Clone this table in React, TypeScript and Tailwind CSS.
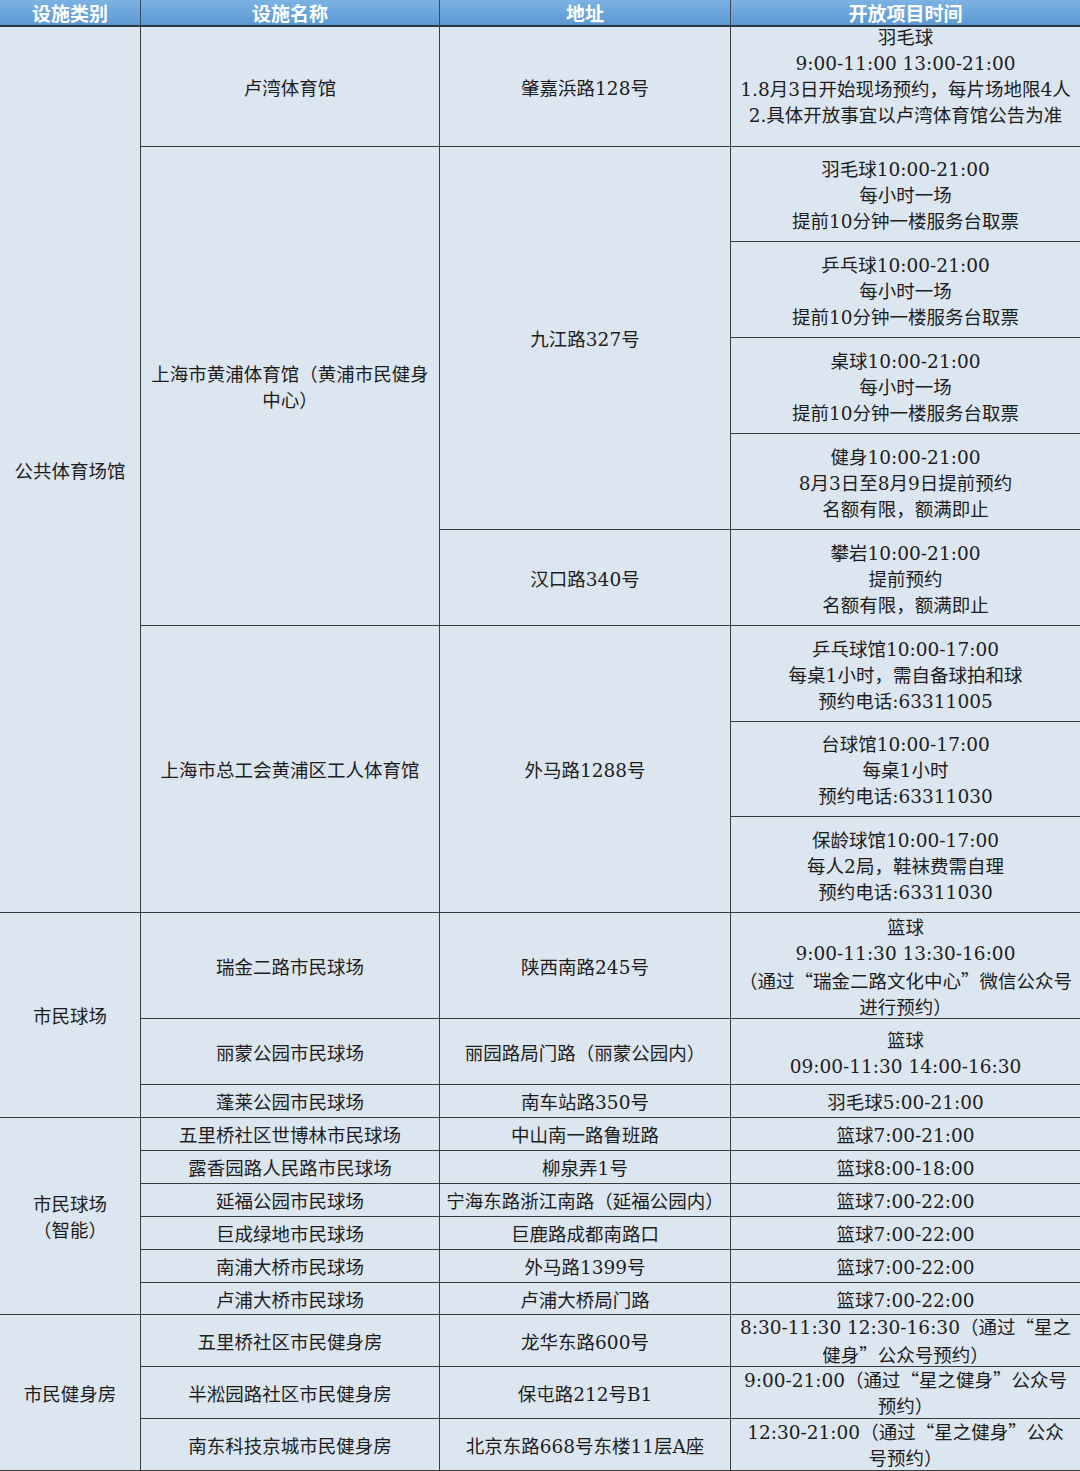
import React from 'react'

type CellProps = {
  children?: React.ReactNode
  className?: string
  last?: boolean
}

// one table cell, text centred both ways
function Cell({ children, className = '', last = false }: CellProps) {
  return (
    <div
      className={
        'flex items-center justify-center text-center whitespace-nowrap leading-[26px] pt-[4px] border-b border-[#3c3c3c] overflow-visible ' +
        (last ? '' : 'border-r ') +
        className
      }
    >
      <div>{children}</div>
    </div>
  )
}

// curly quotes go to the CJK font so they come out full width
function Txt({ s }: { s: string }) {
  const parts = s.split(/([“”])/)
  return (
    <>
      {parts.map((p, i) =>
        p === '“' || p === '”' ? (
          <span key={i} className="font-['Noto_Sans_CJK_SC',sans-serif]">
            {p}
          </span>
        ) : (
          <React.Fragment key={i}>{p}</React.Fragment>
        )
      )}
    </>
  )
}

function Lines({ rows }: { rows: string[] }) {
  return (
    <>
      {rows.map((r, i) => (
        <div key={i}>
          <Txt s={r} />
        </div>
      ))}
    </>
  )
}

const head = ['设施类别', '设施名称', '地址', '开放项目时间']

export default function App() {
  return (
    <div
      className="w-[1080px] h-[1471px] bg-[#dce6f0] text-[#1c1c1c] text-[18.5px] overflow-hidden"
      style={{ fontFamily: '"DejaVu Serif", "Noto Sans CJK SC", serif' }}
    >
      <div className="grid grid-cols-[141px_299px_291px_349px] grid-rows-[27px_120px_95px_96px_96px_96px_96px_96px_95px_96px_106px_66px_33px_33px_33px_33px_33px_33px_32px_52px_52px_52px]">
        {head.map((h, i) => (
          <div
            key={h}
            className={
              'flex items-center justify-center bg-gradient-to-b from-[#7db3e3] to-[#5b98d3] text-white text-[19px] leading-none font-bold border-b-2 border-[#2e3a48] ' +
              (i < 3 ? 'border-r border-r-[#3c4c5c]' : '')
            }
            style={{ fontFamily: '"Noto Sans CJK SC", serif' }}
          >
            {h}
          </div>
        ))}

        {/* 公共体育场馆 */}
        <Cell className="row-span-9">公共体育场馆</Cell>
        <Cell>卢湾体育馆</Cell>
        <Cell>肇嘉浜路128号</Cell>
        <Cell last className="!items-start !pt-0">
          <div className="-mt-[2px]">
            <Lines
              rows={[
                '羽毛球',
                '9:00-11:00 13:00-21:00',
                '1.8月3日开始现场预约，每片场地限4人',
                '2.具体开放事宜以卢湾体育馆公告为准',
              ]}
            />
          </div>
        </Cell>

        <Cell className="row-span-5">
          <Lines rows={['上海市黄浦体育馆（黄浦市民健身', '中心）']} />
        </Cell>
        <Cell className="row-span-4">九江路327号</Cell>
        <Cell last>
          <Lines rows={['羽毛球10:00-21:00', '每小时一场', '提前10分钟一楼服务台取票']} />
        </Cell>
        <Cell last>
          <Lines rows={['乒乓球10:00-21:00', '每小时一场', '提前10分钟一楼服务台取票']} />
        </Cell>
        <Cell last>
          <Lines rows={['桌球10:00-21:00', '每小时一场', '提前10分钟一楼服务台取票']} />
        </Cell>
        <Cell last>
          <Lines rows={['健身10:00-21:00', '8月3日至8月9日提前预约', '名额有限，额满即止']} />
        </Cell>
        <Cell>汉口路340号</Cell>
        <Cell last>
          <Lines rows={['攀岩10:00-21:00', '提前预约', '名额有限，额满即止']} />
        </Cell>

        <Cell className="row-span-3">上海市总工会黄浦区工人体育馆</Cell>
        <Cell className="row-span-3">外马路1288号</Cell>
        <Cell last>
          <Lines rows={['乒乓球馆10:00-17:00', '每桌1小时，需自备球拍和球', '预约电话:63311005']} />
        </Cell>
        <Cell last>
          <Lines rows={['台球馆10:00-17:00', '每桌1小时', '预约电话:63311030']} />
        </Cell>
        <Cell last>
          <Lines rows={['保龄球馆10:00-17:00', '每人2局，鞋袜费需自理', '预约电话:63311030']} />
        </Cell>

        {/* 市民球场 */}
        <Cell className="row-span-3">市民球场</Cell>
        <Cell>瑞金二路市民球场</Cell>
        <Cell>陕西南路245号</Cell>
        <Cell last>
          <Lines
            rows={['篮球', '9:00-11:30 13:30-16:00', '（通过“瑞金二路文化中心”微信公众号', '进行预约）']}
          />
        </Cell>
        <Cell>丽蒙公园市民球场</Cell>
        <Cell>丽园路局门路（丽蒙公园内）</Cell>
        <Cell last>
          <Lines rows={['篮球', '09:00-11:30 14:00-16:30']} />
        </Cell>
        <Cell>蓬莱公园市民球场</Cell>
        <Cell>南车站路350号</Cell>
        <Cell last>羽毛球5:00-21:00</Cell>

        {/* 市民球场（智能） */}
        <Cell className="row-span-6">
          <Lines rows={['市民球场', '（智能）']} />
        </Cell>
        <Cell>五里桥社区世博林市民球场</Cell>
        <Cell>中山南一路鲁班路</Cell>
        <Cell last>篮球7:00-21:00</Cell>
        <Cell>露香园路人民路市民球场</Cell>
        <Cell>柳泉弄1号</Cell>
        <Cell last>篮球8:00-18:00</Cell>
        <Cell>延福公园市民球场</Cell>
        <Cell>宁海东路浙江南路（延福公园内）</Cell>
        <Cell last>篮球7:00-22:00</Cell>
        <Cell>巨成绿地市民球场</Cell>
        <Cell>巨鹿路成都南路口</Cell>
        <Cell last>篮球7:00-22:00</Cell>
        <Cell>南浦大桥市民球场</Cell>
        <Cell>外马路1399号</Cell>
        <Cell last>篮球7:00-22:00</Cell>
        <Cell>卢浦大桥市民球场</Cell>
        <Cell>卢浦大桥局门路</Cell>
        <Cell last>篮球7:00-22:00</Cell>

        {/* 市民健身房 */}
        <Cell className="row-span-3">市民健身房</Cell>
        <Cell>五里桥社区市民健身房</Cell>
        <Cell>龙华东路600号</Cell>
        <Cell last className="!pt-0">
          <Lines rows={['8:30-11:30 12:30-16:30（通过“星之', '健身”公众号预约）']} />
        </Cell>
        <Cell>半淞园路社区市民健身房</Cell>
        <Cell>保屯路212号B1</Cell>
        <Cell last className="!pt-0">
          <Lines rows={['9:00-21:00（通过“星之健身”公众号', '预约）']} />
        </Cell>
        <Cell>南东科技京城市民健身房</Cell>
        <Cell>北京东路668号东楼11层A座</Cell>
        <Cell last className="!pt-0">
          <Lines rows={['12:30-21:00（通过“星之健身”公众', '号预约）']} />
        </Cell>
      </div>
    </div>
  )
}
